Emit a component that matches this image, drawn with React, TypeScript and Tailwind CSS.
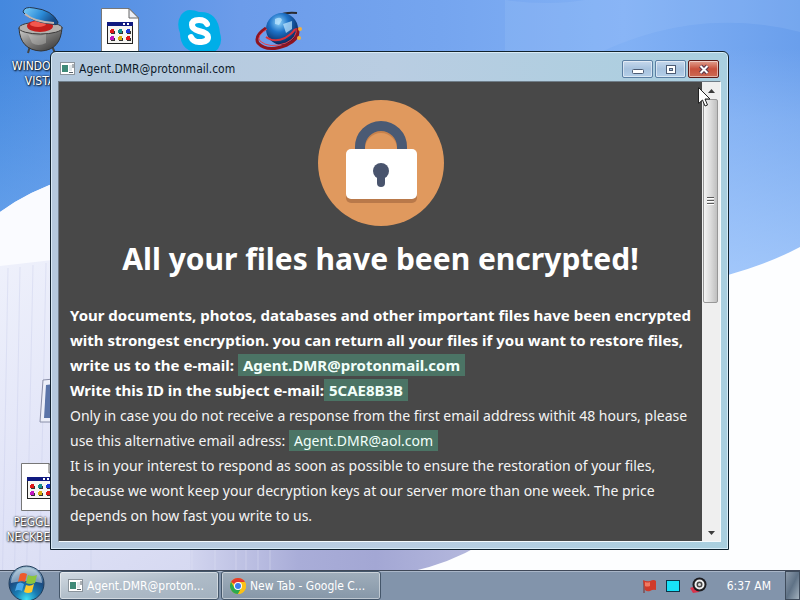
import type { ReactNode } from 'react';
import { clsx } from 'clsx';

// ── Wallpaper ───────────────────────────────────────────────────────────────
function Wallpaper() {
  return (
    <svg
      className="absolute inset-0 h-full w-full"
      viewBox="0 0 800 600"
      preserveAspectRatio="none"
      aria-hidden="true"
    >
      <defs>
        <linearGradient id="sky" x1="0" y1="0" x2="1" y2="0">
          <stop offset="0" stopColor="#4488de" />
          <stop offset="0.3" stopColor="#6c9cea" />
          <stop offset="0.55" stopColor="#75a5ef" />
          <stop offset="0.78" stopColor="#82b1f5" />
          <stop offset="1" stopColor="#6a9fec" />
        </linearGradient>
        <linearGradient id="haze" x1="0" y1="0" x2="0" y2="1">
          <stop offset="0.08" stopColor="#b4d4ff" stopOpacity="0" />
          <stop offset="0.2" stopColor="#b4d4ff" stopOpacity="0.3" />
          <stop offset="0.45" stopColor="#b4d4ff" stopOpacity="0.7" />
        </linearGradient>
        <linearGradient id="leftHaze" x1="0" y1="0" x2="0" y2="1">
          <stop offset="0.08" stopColor="#8abcfa" stopOpacity="0" />
          <stop offset="0.35" stopColor="#8abcfa" stopOpacity="0.4" />
        </linearGradient>
        <linearGradient id="facade" x1="0" y1="0" x2="0.8" y2="1">
          <stop offset="0" stopColor="#f4f6fd" />
          <stop offset="0.5" stopColor="#e0e3f7" />
          <stop offset="1" stopColor="#cdd0ec" />
        </linearGradient>
        <linearGradient id="shade" x1="0" y1="0" x2="1" y2="0">
          <stop offset="0" stopColor="#d2d5ef" />
          <stop offset="0.35" stopColor="#a9add8" />
          <stop offset="0.6" stopColor="#a3a7d4" />
          <stop offset="1" stopColor="#b9bde0" />
        </linearGradient>
      </defs>
      <rect width="800" height="600" fill="url(#sky)" />
      <rect width="400" height="600" fill="url(#leftHaze)" />
      <rect x="400" width="400" height="600" fill="url(#haze)" />
      <path d="M505 0 Q550 6 585 0 L800 0 L800 32 Q690 4 585 60 L505 60 Z" fill="#a5c6fa" opacity="0.2" />
      <path d="M0 212 Q30 190 70 178 L500 160 L500 600 L0 600 Z" fill="url(#facade)" />
      <path d="M0 212 Q30 190 70 178 L70 258 L0 266 Z" fill="#fafbff" />
      <g stroke="#c3c8e8" strokeWidth="1" opacity="0.35">
        <path d="M8 268 L2 600M20 267 L14 600M33 265 L26 600M46 263 L39 600M91 545 V600" />
      </g>
      <path d="M190 545 H500 V600 H190 Z" fill="url(#shade)" />
      <path
        d="M192 545 V600M215 545 V600M236 545 V600M246 545 V600M258 545 V600M270 545 V600"
        stroke="#e4e6f6"
        opacity="0.4"
      />
      <path d="M410 572 Q450 563 480 545 L640 320 Q690 288 728 275 Q768 264 800 247 V600 H410 Z" fill="#fdfeff" />
      <path d="M43 380 L54 379 V422 H40 Z" fill="#eceff9" stroke="#8a8fa8" />
      <path d="M46 385 L54 384 V418 H44 Z" fill="#5a74a8" />
    </svg>
  );
}

// ── Desktop icons ───────────────────────────────────────────────────────────
function GrillIcon() {
  return (
    <svg width="48" height="48" viewBox="0 0 48 48" aria-hidden="true">
      <defs>
        <linearGradient id="bowl" x1="0" y1="0" x2="1" y2="1">
          <stop offset="0" stopColor="#d8d8d6" />
          <stop offset="0.4" stopColor="#8a8988" />
          <stop offset="1" stopColor="#2e2d2d" />
        </linearGradient>
        <linearGradient id="lid" x1="0" y1="0" x2="1" y2="0.4">
          <stop offset="0" stopColor="#7fd0fa" />
          <stop offset="0.6" stopColor="#2b8ad6" />
          <stop offset="1" stopColor="#164a86" />
        </linearGradient>
      </defs>
      <path d="M14 39 L12 46M36 39 L39 46" stroke="#444" strokeWidth="2" />
      <path d="M3 21 Q4 43 25 44 Q45 43 46 20 Z" fill="url(#bowl)" stroke="#333" />
      <ellipse cx="24.500" cy="21" rx="21.500" ry="6" fill="#b4b1ae" stroke="#3c3a3a" />
      <ellipse cx="24" cy="19" rx="13" ry="6" fill="#c41e1c" />
      <ellipse cx="22" cy="17" rx="8" ry="3" fill="#f2584e" />
      <path d="M7 5 Q8 -1 18 1 Q36 3 42 15 Q42 19 36 17 Q14 15 7 5 Z" fill="url(#lid)" stroke="#23364f" />
      <path d="M9 7 Q18 15 38 16" stroke="#c3b5b0" strokeWidth="2" fill="none" />
      <path d="M12 27 Q22 30 30 27 V36 Q22 40 16 36 Z" fill="#e4e4e2" opacity="0.3" />
    </svg>
  );
}

const appDots = [
  { x: 9, y: 22, color: '#e01818' },
  { x: 17, y: 22, color: '#149090' },
  { x: 25, y: 22, color: '#1c38d8' },
  { x: 9, y: 29, color: '#c018c0' },
  { x: 17, y: 29, color: '#d8b010' },
  { x: 25, y: 29, color: '#e01818' },
];

function ProgramFileIcon() {
  return (
    <svg width="38" height="48" viewBox="0 0 38 48" aria-hidden="true">
      <path d="M0.500 0.500 H28 L37.500 10 V47.500 H0.500 Z" fill="#fff" stroke="#777" />
      <path d="M28 0.500 V10 H37.500 Z" fill="#eceff4" stroke="#666" />
      <rect x="6.500" y="14.500" width="25" height="21" fill="#f6f5f2" stroke="#222" />
      <rect x="6" y="14" width="26" height="4" fill="#101a80" />
      <path d="M22 15 h2 v2 h-2zM26 15 h2 v2 h-2z" fill="#fff" />
      {appDots.map((dot) => (
        <g key={`${dot.x}-${dot.y}`}>
          <rect x={dot.x + 1} y={dot.y + 1} width="4" height="3" fill="#333" />
          <rect x={dot.x} y={dot.y - 1} width="4" height="4" fill={dot.color} />
          <rect x={dot.x} y={dot.y - 1} width="1" height="1" fill="#fff" />
        </g>
      ))}
    </svg>
  );
}

function SkypeIcon() {
  return (
    <svg width="46" height="46" viewBox="0 0 46 46" aria-hidden="true">
      <path
        d="M13 1 Q18 1 22 3 Q41 2 43 24 Q46 33 41 40 Q34 47 24 44 Q3 43 3 24 Q-1 14 4 6 Q8 1 13 1 Z"
        fill="#00aee8"
      />
      <path
        d="M30 15 Q28 11 22 11 Q15 11 15 16 Q15 20 22 22 Q31 24 31 28 Q31 33 22 33 Q16 33 14 28"
        fill="none"
        stroke="#fff"
        strokeWidth="6"
        strokeLinecap="round"
      />
    </svg>
  );
}

function GlobeIcon() {
  return (
    <svg width="50" height="42" viewBox="0 0 50 42" aria-hidden="true">
      <defs>
        <radialGradient id="globe" cx="0.4" cy="0.3" r="0.75">
          <stop offset="0" stopColor="#8fd4fb" />
          <stop offset="0.4" stopColor="#1d72c8" />
          <stop offset="1" stopColor="#061845" />
        </radialGradient>
      </defs>
      <path d="M13 14 Q22 1 42 3" stroke="#2a2a2e" strokeWidth="2" fill="none" />
      <circle cx="27" cy="19" r="16" fill="url(#globe)" />
      <path d="M20 9 Q26 6 27 10 L24 15 L20 14 ZM28 14 L37 11 L37 19 L31 23 Z" fill="#c2e8ff" opacity="0.7" />
      <path
        d="M11 18 Q-1 26 3 33 Q12 43 32 35 Q46 28 42 18"
        stroke="#8f1420"
        strokeWidth="3"
        fill="none"
      />
      <path
        d="M12 19 Q1 26 5 31 Q14 39 31 33 Q43 27 41 18"
        stroke="#e8424c"
        strokeWidth="1"
        fill="none"
      />
      <path d="M11 27 Q19 33 30 28 Q38 23 40 19" stroke="#d8323c" strokeWidth="2" fill="none" />
      <circle cx="45" cy="19" r="2" fill="#f6b13a" />
      <circle cx="44" cy="28" r="2" fill="#f6b13a" />
    </svg>
  );
}

interface ShortcutProps {
  label?: string[];
  className: string;
  children: ReactNode;
}

function Shortcut({ label = [], className, children }: ShortcutProps) {
  return (
    <button
      type="button"
      className={clsx('absolute flex w-20 flex-col items-center gap-1', className)}
    >
      {children}
      <span className="text-xs leading-[15px] whitespace-nowrap text-white [text-shadow:1px_1px_2px_#000,0_0_2px_#000]">
        {label.map((line) => (
          <span key={line} className="block">
            {line}
          </span>
        ))}
      </span>
    </button>
  );
}

// ── Window ──────────────────────────────────────────────────────────────────
function AppIcon() {
  return (
    <svg className="shrink-0" width="15" height="13" viewBox="0 0 15 13" aria-hidden="true">
      <rect x="0.500" y="0.500" width="14" height="12" fill="#fff" stroke="#8b949c" />
      <rect x="2" y="3" width="6" height="7" fill="#3f8a78" />
      <rect x="9" y="3" width="3" height="6" fill="#dfe6ea" />
      <path d="M13 2 V6M9 10.500 H13" stroke="#59636b" />
    </svg>
  );
}

const captionButton =
  'flex h-[18px] w-[31px] items-center justify-center rounded-[2px] border shadow-[inset_0_0_0_1px_rgba(255,255,255,0.5)]';
const plainCaption = 'border-[#5b7fa3] bg-linear-to-b from-[#c6d8ec] via-[#a7c2de] to-[#b4cfe8]';

function TitleBar() {
  return (
    <header className="flex h-[29px] shrink-0 items-center gap-1 pt-1 pr-0.5 pl-0.5">
      <AppIcon />
      <h1 className="flex-1 truncate text-xs text-[#0c1a2a]">Agent.DMR@protonmail.com</h1>
      <div className="flex gap-0.5">
        <button type="button" aria-label="Minimize" className={clsx(captionButton, plainCaption)}>
          <svg width="12" height="12" viewBox="0 0 12 12">
            <rect x="0.500" y="6.500" width="11" height="4" rx="1" fill="#fff" stroke="#4d5c74" />
          </svg>
        </button>
        <button type="button" aria-label="Maximize" className={clsx(captionButton, plainCaption)}>
          <svg width="12" height="12" viewBox="0 0 12 12">
            <rect x="1.500" y="2.500" width="9" height="8" fill="#fff" stroke="#4d5c74" />
            <rect x="4.500" y="5.500" width="3" height="2" fill="#a7c2de" stroke="#4d5c74" />
          </svg>
        </button>
        <button
          type="button"
          aria-label="Close"
          className={clsx(
            captionButton,
            'border-[#5c1b18] bg-linear-to-b from-[#e0a090] via-[#c8503c] to-[#cc6a54]',
          )}
        >
          <svg width="12" height="12" viewBox="0 0 12 12">
            <path d="M2.500 3 L9.500 10M9.500 3 L2.500 10" stroke="#55354a" strokeWidth="4" />
            <path d="M2.500 3 L9.500 10M9.500 3 L2.500 10" stroke="#fff" strokeWidth="2" />
          </svg>
        </button>
      </div>
    </header>
  );
}

function Padlock() {
  return (
    <svg className="mx-auto" width="126" height="126" viewBox="0 0 126 126" role="img" aria-label="Padlock">
      <circle cx="63" cy="63" r="63" fill="#e0995e" />
      <path d="M42 56 V49 A21 21 0 0 1 84 49 V56" fill="none" stroke="#c7824c" strokeWidth="10" />
      <path d="M42 54 V47 A21 21 0 0 1 84 47 V54" fill="none" stroke="#4a5a74" strokeWidth="10" />
      <rect x="28" y="53" width="71" height="50" rx="5" fill="#b9794a" />
      <rect x="28" y="49" width="71" height="50" rx="5" fill="#fff" />
      <circle cx="63" cy="71" r="8" fill="#49546d" />
      <path d="M63 73 V83" stroke="#49546d" strokeWidth="8" strokeLinecap="round" />
    </svg>
  );
}

function Mark({ children }: { children: ReactNode }) {
  return <mark className="bg-[#4b7465] px-[5px] py-px text-[#f2fffa]">{children}</mark>;
}

function Message() {
  return (
    <main className="min-w-0 flex-1 overflow-hidden bg-[#484848] px-[11px] pt-[18px] font-['Noto_Sans',sans-serif] text-sm leading-[25px] text-[#f4f4f4]">
      <Padlock />
      <h2 className="mt-[14px] mb-[25px] text-center text-[30px] leading-[38px] font-bold whitespace-nowrap text-white">
        All your files have been encrypted!
      </h2>
      <p className="text-[15px] leading-[25px] font-bold whitespace-nowrap text-white">
        Your documents, photos, databases and other important files have been encrypted
        <br />
        with strongest encryption. you can return all your files if you want to restore files,
        <br />
        write us to the e-mail: <Mark>Agent.DMR@protonmail.com</Mark>
        <br />
        Write this ID in the subject e-mail:<Mark>5CAE8B3B</Mark>
      </p>
      <p className="whitespace-nowrap">
        Only in case you do not receive a response from the first email address withit 48 hours, please
        <br />
        use this alternative email adress: <Mark>Agent.DMR@aol.com</Mark>
      </p>
      <p className="whitespace-nowrap">
        It is in your interest to respond as soon as possible to ensure the restoration of your files,
        <br />
        because we wont keep your decryption keys at our server more than one week. The price
        <br />
        depends on how fast you write to us.
      </p>
    </main>
  );
}

function ScrollBar() {
  return (
    <div className="flex w-[18px] shrink-0 flex-col bg-[#efefef]">
      <button type="button" aria-label="Scroll up" className="flex h-[17px] items-center justify-center">
        <svg width="7" height="4" viewBox="0 0 7 4">
          <path d="M0 4 L3.500 0 L7 4 Z" fill="#3c3c3c" />
        </svg>
      </button>
      <div className="flex-1">
        <div className="mr-0.5 ml-px flex h-[48%] items-center justify-center rounded-[2px] border border-[#979797] bg-linear-to-r from-[#f4f4f4] via-[#dcdcdc] to-[#bfbfbf]">
          <svg width="7" height="8" viewBox="0 0 7 8">
            <path d="M0 0.500 H7M0 3.500 H7M0 6.500 H7" stroke="#5a5a5a" />
            <path d="M0 1.500 H7M0 4.500 H7M0 7.500 H7" stroke="#fff" />
          </svg>
        </div>
      </div>
      <button type="button" aria-label="Scroll down" className="flex h-[17px] items-center justify-center">
        <svg width="7" height="4" viewBox="0 0 7 4">
          <path d="M0 0 L3.500 4 L7 0 Z" fill="#3c3c3c" />
        </svg>
      </button>
    </div>
  );
}

function NoteWindow() {
  return (
    <section className="absolute top-[51px] right-[71px] bottom-[20px] left-[50px] flex flex-col rounded-t-md border border-[#10222e] bg-linear-to-r from-[#b4c9dd] via-[#b9cde2] to-[#a9cfdf] px-[7px] pb-[7px] shadow-[inset_0_0_0_1px_rgba(225,242,252,0.8)]">
      <TitleBar />
      <div className="flex min-h-0 flex-1 border border-t-[#6f7d88] border-r-[#f4fafd] border-b-[#f4fafd] border-l-[#6f7d88]">
        <Message />
        <ScrollBar />
      </div>
    </section>
  );
}

function Cursor() {
  return (
    <svg className="absolute top-[87px] left-[698px]" width="13" height="21" viewBox="0 0 13 21" aria-hidden="true">
      <path
        d="M0.500 0.500 V16.500 L4.500 13 L7 19 L9.500 18 L7 12 H12 Z"
        fill="#fff"
        stroke="#222"
      />
    </svg>
  );
}

// ── Taskbar ─────────────────────────────────────────────────────────────────
function StartOrb() {
  return (
    <svg className="h-[37px] w-[37px]" viewBox="0 0 37 37" aria-hidden="true">
      <defs>
        <radialGradient id="orb" cx="0.5" cy="0.95" r="0.9">
          <stop offset="0" stopColor="#3fe0f4" />
          <stop offset="0.35" stopColor="#1a7db4" />
          <stop offset="0.7" stopColor="#1b4a80" />
          <stop offset="1" stopColor="#8fb0c8" />
        </radialGradient>
      </defs>
      <circle cx="18.500" cy="18.500" r="17.500" fill="url(#orb)" stroke="#1f3c5a" />
      <path d="M3 18 A15.500 15.500 0 0 1 34 18 Q18 14 3 18 Z" fill="#d7e6ef" opacity="0.55" />
      <path d="M12 9 Q15 7 19 9 L17 17 Q13 15 10 17 Z" fill="#ee5a2c" />
      <path d="M20 10 Q24 12 29 10 L27 18 Q22 20 18 18 Z" fill="#8cc63e" />
      <path d="M9 19 Q12 16 16 19 L14 26 Q10 24 7 26 Z" fill="#4aa8ea" />
      <path d="M18 20 Q22 22 26 19 L24 27 Q20 29 16 27 Z" fill="#fdc92e" />
    </svg>
  );
}

function ChromeIcon() {
  return (
    <svg className="shrink-0" width="16" height="16" viewBox="0 0 16 16" aria-hidden="true">
      <circle cx="8" cy="8" r="8" fill="#fbc116" />
      <path d="M8 8 L1.070 4 A8 8 0 0 1 14.930 4 Z" fill="#e33b2e" />
      <path d="M1.070 4 A8 8 0 0 0 8 16 L11.500 10 L8 8 L4.500 10 Z" fill="#2da94f" />
      <path d="M8 4 H14.930 A8 8 0 0 1 8 16 L11.500 10 Z" fill="#fbc116" />
      <circle cx="8" cy="8" r="4" fill="#fff" />
      <circle cx="8" cy="8" r="3" fill="#3b7ded" />
    </svg>
  );
}

interface TaskProps {
  icon: ReactNode;
  title: string;
  active?: boolean;
}

function Task({ icon, title, active = false }: TaskProps) {
  return (
    <button
      type="button"
      className={clsx(
        'flex w-40 items-center gap-1 rounded-[3px] border border-[#44566a] px-2 text-left text-xs text-white shadow-[inset_0_0_0_1px_rgba(255,255,255,0.45)]',
        active
          ? 'bg-linear-to-br from-[#d2dae2] via-[#afbcc8] to-[#a3b1bf]'
          : 'bg-linear-to-b from-[#a0aebb] to-[#8697a8]',
      )}
    >
      {icon}
      <span className="whitespace-nowrap">{title}</span>
    </button>
  );
}

function FlagIcon() {
  return (
    <svg width="16" height="16" viewBox="0 0 16 16">
      <path d="M2 3 V15" stroke="#7a2a24" strokeWidth="1" />
      <path d="M1 2 Q5 4 8 3 Q12 1 14 3 V12 Q11 11 8 13 Q5 14 3 12 Z" fill="#d03a2a" />
      <path d="M3 4 Q6 5 8 4 V8 Q5 9 3 8 Z" fill="#f07a62" />
    </svg>
  );
}

function ScreenIcon() {
  return (
    <svg width="14" height="12" viewBox="0 0 14 12">
      <rect x="0.500" y="0.500" width="13" height="11" fill="#18e0f8" stroke="#0c3448" />
    </svg>
  );
}

function SpeakerIcon() {
  return (
    <svg width="17" height="17" viewBox="0 0 17 17">
      <path d="M0 11 L8 8 L9 15 L3 16 Z" fill="#d8344c" />
      <circle cx="9.500" cy="7.500" r="7" fill="#1c1c20" />
      <circle cx="9.500" cy="7.500" r="4" fill="#444" stroke="#eee" strokeWidth="2" />
      <circle cx="9.500" cy="7.500" r="1.500" fill="#ddd" />
    </svg>
  );
}

function TaskBar() {
  return (
    <footer className="relative flex h-[30px] shrink-0 border-t border-[#3f4858] bg-[#8294ab] shadow-[inset_0_1px_0_#a9b6c8]">
      <button type="button" aria-label="Start" className="-mt-1.5 ml-2 h-[37px] shrink-0">
        <StartOrb />
      </button>
      <nav className="ml-3.5 flex flex-1 gap-0.5">
        <Task icon={<AppIcon />} title="Agent.DMR@proton..." active />
        <Task icon={<ChromeIcon />} title="New Tab - Google C..." />
      </nav>
      <div className="flex items-center">
        <button type="button" aria-label="Action Center" className="mr-2">
          <FlagIcon />
        </button>
        <button type="button" aria-label="Display" className="mr-2.5">
          <ScreenIcon />
        </button>
        <button type="button" aria-label="Volume" className="mr-5">
          <SpeakerIcon />
        </button>
        <time className="mr-3.5 text-xs text-white">6:37 AM</time>
        <button
          type="button"
          aria-label="Show desktop"
          className="h-full w-[15px] border border-[#3f4c5c] bg-linear-to-br from-[#8c9aaa] via-[#5f7286] to-[#a4b2be]"
        />
      </div>
    </footer>
  );
}

export default function App() {
  return (
    <div className="relative flex h-screen flex-col overflow-hidden font-['DejaVu_Sans_Condensed','Noto_Sans',sans-serif]">
      <Wallpaper />
      <div className="relative flex-1">
        <Shortcut className="top-[7px] left-0" label={['WINDOWS', 'VISTA']}>
          <GrillIcon />
        </Shortcut>
        <Shortcut className="top-[8px] left-20">
          <ProgramFileIcon />
        </Shortcut>
        <Shortcut className="top-[9px] left-40">
          <SkypeIcon />
        </Shortcut>
        <Shortcut className="top-[10px] left-60">
          <GlobeIcon />
        </Shortcut>
        <Shortcut className="top-[463px] left-0" label={['PEGGLE 2', 'NECKBEARD']}>
          <ProgramFileIcon />
        </Shortcut>
        <NoteWindow />
        <Cursor />
      </div>
      <TaskBar />
    </div>
  );
}
